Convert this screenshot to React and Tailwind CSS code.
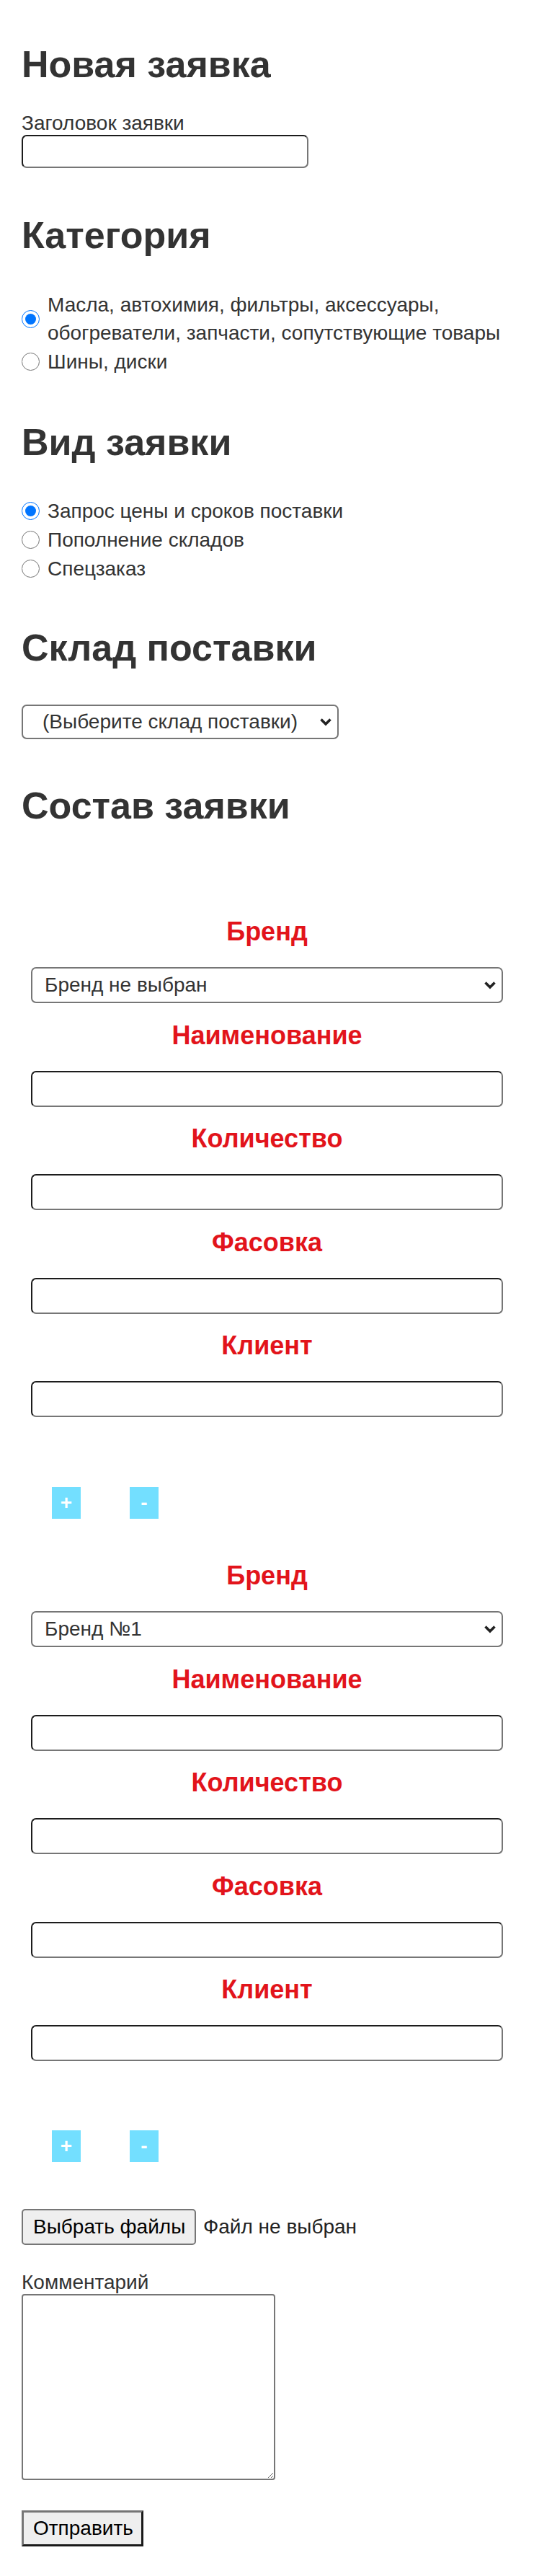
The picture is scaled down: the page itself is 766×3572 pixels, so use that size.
import { useState } from "react";

const categories = [
  "Масла, автохимия, фильтры, аксессуары, обогреватели, запчасти, сопутствующие товары",
  "Шины, диски",
];

const kinds = ["Запрос цены и сроков поставки", "Пополнение складов", "Спецзаказ"];

const inputCls =
  "block bg-white rounded-[7px] border-2 border-t-[#1c1c1c] border-l-[#1c1c1c] border-r-[#767676] border-b-[#767676] outline-none px-[4px]";

function Chevron() {
  return (
    <svg
      className="pointer-events-none absolute right-[9px] top-1/2 -translate-y-1/2"
      width="18"
      height="12"
      viewBox="0 0 18 12"
    >
      <path d="M2.5 2.5l6.5 6.5 6.5-6.5" fill="none" stroke="#222" strokeWidth="3.6" />
    </svg>
  );
}

function Select({ value, options, className = "", pad = "pl-[17px]" }) {
  return (
    <div className={`relative ${className}`}>
      <select
        defaultValue={value}
        className={`block w-full h-full appearance-none bg-white rounded-[7px] border-2 border-[#767676] text-[#333] ${pad} pr-[36px] outline-none`}
      >
        {options.map((o) => (
          <option key={o}>{o}</option>
        ))}
      </select>
      <Chevron />
    </div>
  );
}

function RadioGroup({ name, items }) {
  const [picked, setPicked] = useState(0);
  return (
    <div className="flex flex-col">
      {items.map((t, i) => (
        <label key={t} className="flex items-center min-h-[40px] gap-[11px] w-[704px]">
          <input
            type="radio"
            name={name}
            checked={picked === i}
            onChange={() => setPicked(i)}
            className="w-[25px] h-[25px] m-0 shrink-0"
          />
          <span className="leading-[39px]">{t}</span>
        </label>
      ))}
    </div>
  );
}

function Field({ label, children }) {
  return (
    <div>
      <div className="text-center font-bold text-[36px] leading-[40px] text-[#e2141b]">{label}</div>
      <div className="mt-[29px] h-[50px]">{children}</div>
    </div>
  );
}

function ItemBlock({ brand, className = "" }) {
  return (
    <div className={className}>
      <div className="ml-[13px] w-[655px] flex flex-col gap-[24.5px]">
        <Field label="Бренд">
          <Select
            value={brand}
            options={["Бренд не выбран", "Бренд №1", "Бренд №2"]}
            className="h-[50px]"
          />
        </Field>
        <Field label="Наименование">
          <input type="text" className={`${inputCls} w-full h-[50px]`} />
        </Field>
        <Field label="Количество">
          <input type="text" className={`${inputCls} w-full h-[50px]`} />
        </Field>
        <Field label="Фасовка">
          <input type="text" className={`${inputCls} w-full h-[50px]`} />
        </Field>
        <Field label="Клиент">
          <input type="text" className={`${inputCls} w-full h-[50px]`} />
        </Field>
      </div>
    </div>
  );
}

function PlusMinus({ className = "" }) {
  return (
    <div className={`flex gap-[68px] ml-[42px] ${className}`}>
      <button className="w-[40px] h-[44px] bg-[#73dfff] text-white font-bold text-[28px] leading-none">
        +
      </button>
      <button className="w-[40px] h-[44px] bg-[#73dfff] text-white font-bold text-[28px] leading-none">
        -
      </button>
    </div>
  );
}

const h2Cls = "font-bold text-[52px] leading-[60px]";

export default function App() {
  return (
    <div className="bg-white text-[#333] font-['Liberation_Sans',Arial,sans-serif] text-[28px] leading-[32px] pl-[30px] pt-[59px] pb-[41px]">
      <h1 className="font-bold text-[52px] leading-[60px]">Новая заявка</h1>

      <div className="mt-[36px]">Заголовок заявки</div>
      <input type="text" className={`${inputCls} w-[398px] h-[46px]`} />

      <h2 className={`mt-[63px] ${h2Cls}`}>Категория</h2>
      <div className="mt-[47px]">
        <RadioGroup name="cat" items={categories} />
      </div>

      <h2 className={`mt-[62px] ${h2Cls}`}>Вид заявки</h2>
      <div className="mt-[45px]">
        <RadioGroup name="kind" items={kinds} />
      </div>

      <h2 className={`mt-[60px] ${h2Cls}`}>Склад поставки</h2>
      <Select
        value="(Выберите склад поставки)"
        options={["(Выберите склад поставки)", "Склад №1", "Склад №2"]}
        className="mt-[49px] w-[440px] h-[48px]"
        pad="pl-[27px]"
      />

      <h2 className={`mt-[62px] ${h2Cls}`}>Состав заявки</h2>

      <ItemBlock brand="Бренд не выбран" className="mt-[125px]" />
      <PlusMinus className="mt-[97px]" />

      <ItemBlock brand="Бренд №1" className="mt-[59px]" />
      <PlusMinus className="mt-[96px]" />

      <div className="mt-[65px] flex items-center gap-[10px] h-[50px]">
        <button className="h-[50px] w-[242px] text-left pl-[14px] bg-[#efefef] text-black border-2 border-[#767676] rounded-[5px]">
          Выбрать файлы
        </button>
        <span className="text-[#222]">Файл не выбран</span>
      </div>

      <div className="mt-[36px]">Комментарий</div>
      <textarea className="block w-[352px] h-[258px] bg-white border-2 border-[#767676] rounded-[4px] outline-none" />

      <button className="mt-[42px] block h-[50px] w-[169px] text-left pl-[13px] bg-[#efefef] text-black border-[3px] border-t-[#767676] border-l-[#767676] border-r-[#1a1a1a] border-b-[#1a1a1a]">
        Отправить
      </button>
    </div>
  );
}
